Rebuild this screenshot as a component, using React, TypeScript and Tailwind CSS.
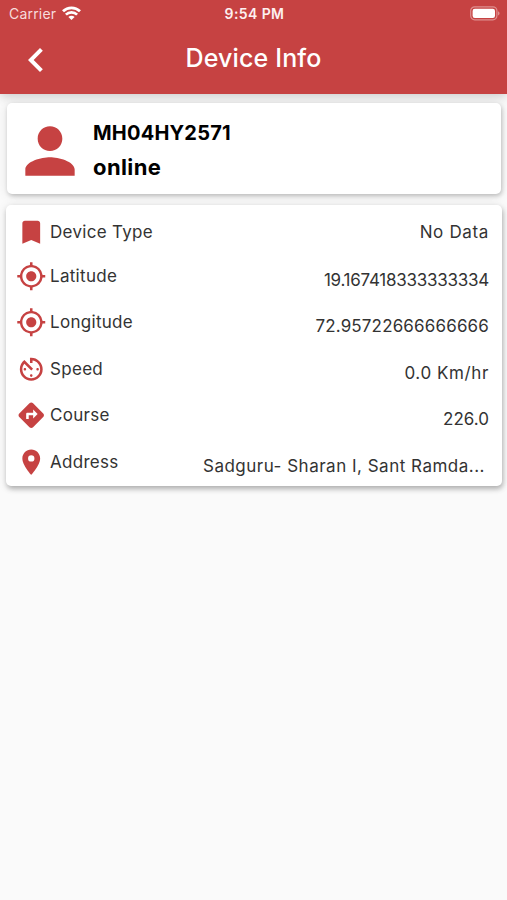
import type { IconType } from "react-icons";
import {
  MdAvTimer,
  MdBookmark,
  MdChevronLeft,
  MdDirections,
  MdGpsFixed,
  MdLocationOn,
  MdPerson,
} from "react-icons/md";

interface DetailRow {
  icon: IconType;
  label: string;
  value: string;
  valueClass: string;
  rowClass: string;
}

const rows: DetailRow[] = [
  { icon: MdBookmark, label: "Device Type", value: "No Data", valueClass: "tracking-[0.65px] pt-px", rowClass: "h-[41px]" },
  { icon: MdGpsFixed, label: "Latitude", value: "19.167418333333334", valueClass: "tracking-[-0.25px] pt-[9px]", rowClass: "h-[46.4px]" },
  { icon: MdGpsFixed, label: "Longitude", value: "72.95722666666666", valueClass: "tracking-[0.16px] pt-[9px]", rowClass: "h-[46.4px]" },
  { icon: MdAvTimer, label: "Speed", value: "0.0 Km/hr", valueClass: "tracking-[0.6px] pt-[9px]", rowClass: "h-[46.4px]" },
  { icon: MdDirections, label: "Course", value: "226.0", valueClass: "tracking-[0px] pt-[9px]", rowClass: "h-[46.4px]" },
  { icon: MdLocationOn, label: "Address", value: "Sadguru- Sharan I, Sant Ramda...", valueClass: "tracking-[0.5px] pt-[9px] pr-[4px]", rowClass: "h-[46.4px]" },
];

function StatusBar() {
  return (
    <div className="grid h-[27px] grid-cols-3 items-center pl-[9px] pr-[7px] text-[14px]">
      <div className="flex items-center gap-[6px]">
        <span className="tracking-[0.2px] text-[#f7dcdc]">Carrier</span>
        <svg className="-mt-[2px]" width="19" height="14" viewBox="0 0 19 14" fill="none" stroke="white">
          <path d="M1 5.3a12.2 12.2 0 0 1 17 0" strokeWidth="2.8" />
          <path d="M3.9 8.7a7.8 7.8 0 0 1 11.2 0" strokeWidth="2.6" />
          <path d="M9.5 13.9 6.4 11a4.2 4.2 0 0 1 6.2 0Z" fill="white" stroke="none" />
        </svg>
      </div>
      <span className="text-center font-semibold tracking-[0.4px] whitespace-nowrap text-[#fdf0f0]">9:54 PM</span>
      <div className="flex justify-end">
        <svg width="30" height="15" viewBox="0 0 30 15">
          <rect x="0.7" y="0.8" width="26.2" height="13" rx="4" fill="none" stroke="#de8f8f" strokeWidth="1.2" />
          <rect x="2.6" y="2.7" width="22.4" height="9.2" rx="2.2" fill="white" />
          <path d="M28 5.2c2.1.8 2.1 3.4 0 4.2Z" fill="#de8f8f" />
        </svg>
      </div>
    </div>
  );
}

export default function App() {
  return (
    <div className="flex h-[900px] w-[507px] flex-col overflow-hidden bg-[#fafafa] font-['Inter','Liberation_Sans',sans-serif]">
      <header className="h-[94px] shrink-0 bg-[#c64242] text-white shadow-[0_2px_10px_rgba(0,0,0,0.2)]">
        <StatusBar />
        <div className="grid h-[64px] grid-cols-[56px_1fr_56px] items-center">
          <MdChevronLeft className="mt-px ml-[12px] size-[48px]" />
          <h1 className="text-center text-[25px] font-medium tracking-[0.15px]">Device Info</h1>
        </div>
      </header>

      <section className="mt-[9px] mr-[6px] ml-[7px] flex h-[91px] shrink-0 items-center rounded-[5px] bg-white shadow-[1px_2px_4px_rgba(0,0,0,0.2),0_1px_12px_rgba(0,0,0,0.1)]">
        <MdPerson className="mt-[4px] ml-[6px] size-[74px] text-[#c64242]" />
        <div className="mt-[2px] ml-[6px] flex flex-col text-[20px] leading-[34px] font-bold text-black">
          <span className="tracking-[0.2px]">MH04HY2571</span>
          <span className="text-[22px] tracking-[0.4px]">online</span>
        </div>
      </section>

      <section className="mt-[11px] mr-[5px] ml-[6px] flex h-[281px] shrink-0 flex-col rounded-[5px] bg-white pt-[7px] pr-[13px] pl-[9.5px] shadow-[1px_3px_5px_rgba(0,0,0,0.25),0_1px_10px_rgba(0,0,0,0.1)]">
        {rows.map(({ icon: Icon, label, value, valueClass, rowClass }) => (
          <div key={label} className={`flex shrink-0 items-center text-[17px] text-[#333] ${rowClass}`}>
            <Icon className="size-[30.5px] shrink-0 text-[#c64242]" />
            <span className="ml-[4px] pt-px tracking-[0.3px] whitespace-nowrap">{label}</span>
            <span className={`ml-auto whitespace-nowrap ${valueClass}`}>{value}</span>
          </div>
        ))}
      </section>
    </div>
  );
}
